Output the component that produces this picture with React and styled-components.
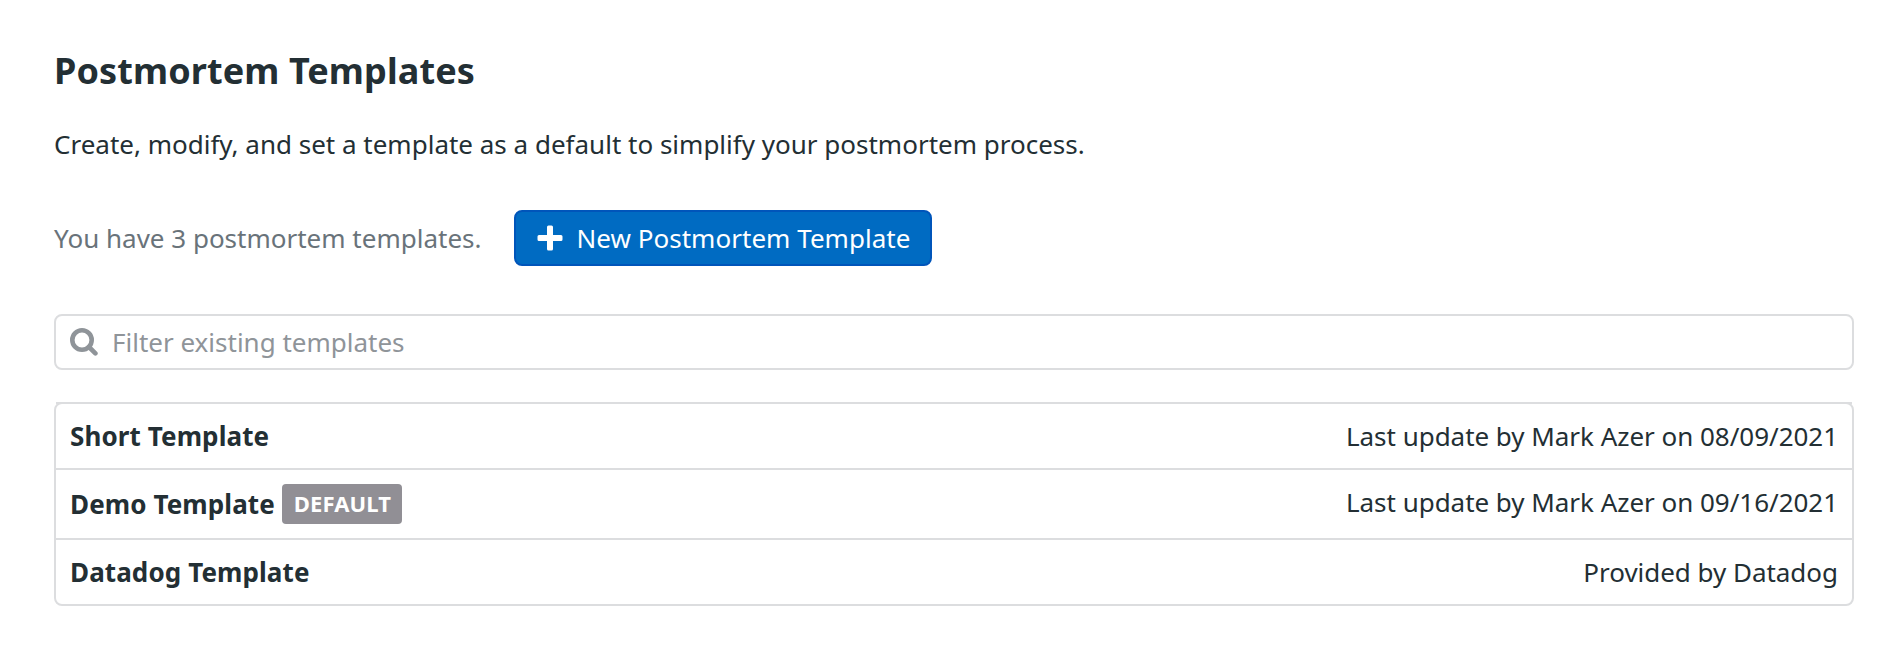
import React from "react";
import styled, { createGlobalStyle } from "styled-components";

const GlobalStyle = createGlobalStyle`
  *, *::before, *::after { box-sizing: border-box; }
  body {
    margin: 0;
    background: #fff;
    color: #232f34;
    font-family: "Noto Sans", sans-serif;
    font-size: 26px;
    line-height: 36px;
  }
`;

const Page = styled.main`
  display: flex;
  flex-direction: column;
  padding: 46px 50px 50px 54px;
`;

const Title = styled.h1`
  margin: 0 0 30px;
  font-size: 36px;
  line-height: 50px;
  font-weight: 700;
  letter-spacing: 0.1px;
`;

const Description = styled.p`
  margin: 0 0 48px;
`;

const Actions = styled.div`
  display: flex;
  align-items: center;
  gap: 33px;
  margin-bottom: 48px;
`;

const Count = styled.span`
  color: #69737a;
`;

const NewButton = styled.button`
  display: flex;
  align-items: center;
  gap: 13px;
  width: 418px;
  height: 56px;
  padding: 0 0 0 21px;
  border: 2px solid #0055ba;
  border-radius: 8px;
  background: #006bc2;
  color: #fff;
  font: inherit;
  letter-spacing: 0.03px;
  white-space: nowrap;
`;

const Search = styled.label`
  display: flex;
  align-items: center;
  gap: 14px;
  height: 56px;
  margin-bottom: 32px;
  padding: 0 14px;
  border: 2px solid #dcdddf;
  border-radius: 8px;
  color: #8f9499;
`;

const SearchInput = styled.input`
  flex: 1;
  min-width: 0;
  padding: 0;
  border: 0;
  outline: 0;
  background: transparent;
  color: #232f34;
  font: inherit;
  &::placeholder { color: #8f9499; opacity: 1; }
`;

const List = styled.ul`
  margin: 0;
  padding: 0;
  list-style: none;
  border: 2px solid #dcdddf;
  border-radius: 8px;
`;

const Row = styled.li`
  display: flex;
  align-items: flex-start;
  justify-content: space-between;
  padding: 14px;
  border-top: 2px solid #dcdddf;
  &:first-child { margin-top: -2px; }
`;

const Name = styled.div`
  display: flex;
  align-items: center;
  gap: 7px;
  font-weight: 700;
  letter-spacing: 0.1px;
`;

const Note = styled.span`
  letter-spacing: -0.03px;
`;

const Badge = styled.span`
  height: 40px;
  padding: 0 11px 0 12px;
  border-radius: 4px;
  background: #918f95;
  color: #fff;
  font-size: 22px;
  line-height: 38px;
`;

const templates = [
  { name: "Short Template", note: "Last update by Mark Azer on 08/09/2021" },
  { name: "Demo Template", note: "Last update by Mark Azer on 09/16/2021", isDefault: true },
  { name: "Datadog Template", note: "Provided by Datadog" },
];

const PlusIcon = () => (
  <svg width="26" height="26" viewBox="0 0 26 26" fill="none" stroke="currentColor" strokeWidth="3" strokeLinejoin="round" aria-hidden="true">
    <path fill="currentColor" d="M11.500 2h3v9.500H24v3h-9.500V24h-3v-9.500H2v-3h9.500z" />
  </svg>
);

const SearchIcon = () => (
  <svg width="28" height="28" viewBox="0 0 28 28" fill="none" stroke="currentColor" aria-hidden="true">
    <circle cx="12" cy="12" r="9.700" strokeWidth="4.600" />
    <path d="M19 19l6.400 6.400" strokeWidth="4.600" strokeLinecap="round" />
  </svg>
);

export default function App() {
  return (
    <>
      <GlobalStyle />
      <Page>
        <Title>Postmortem Templates</Title>
        <Description>
          Create, modify, and set a template as a default to simplify your postmortem process.
        </Description>
        <Actions>
          <Count>You have {templates.length} postmortem templates.</Count>
          <NewButton type="button">
            <PlusIcon />
            New Postmortem Template
          </NewButton>
        </Actions>
        <Search>
          <SearchIcon />
          <SearchInput placeholder="Filter existing templates" />
        </Search>
        <List>
          {templates.map((t) => (
            <Row key={t.name}>
              <Name>
                {t.name}
                {t.isDefault && <Badge>DEFAULT</Badge>}
              </Name>
              <Note>{t.note}</Note>
            </Row>
          ))}
        </List>
      </Page>
    </>
  );
}
